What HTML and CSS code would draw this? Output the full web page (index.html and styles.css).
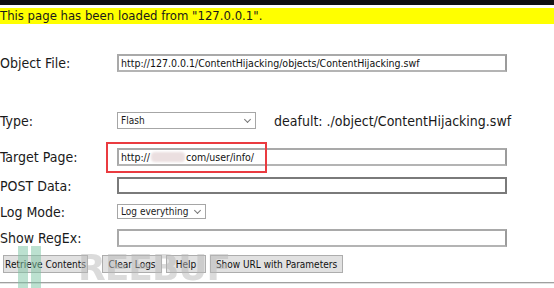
FILE: index.html
```html
<!DOCTYPE html>
<html lang="en">
<head>
    <meta charset="UTF-8">
    <title>Content Hijacking</title>
    <link rel="stylesheet" href="styles.css">
</head>
<body>
    <div class="topbar"></div>
    <div class="notice">This page has been loaded from "127.0.0.1".</div>

    <form class="form">
        <div class="row row-object">
            <label class="label">Object File:</label>
            <input class="field" type="text" value="http://127.0.0.1/ContentHijacking/objects/ContentHijacking.swf">
        </div>
        <div class="row row-type">
            <label class="label">Type:</label>
            <div class="select select-type"><span>Flash</span><span class="caret"></span></div>
            <span class="hint">deafult: ./object/ContentHijacking.swf</span>
        </div>
        <div class="row row-target">
            <label class="label">Target Page:</label>
            <div class="field">http://<span class="blur"></span>com/user/info/</div>
            <div class="highlight"></div>
        </div>
        <div class="row row-post">
            <label class="label">POST Data:</label>
            <div class="field field-dark"></div>
        </div>
        <div class="row row-log">
            <label class="label">Log Mode:</label>
            <div class="select select-log"><span>Log everything</span><span class="caret"></span></div>
        </div>
        <div class="row row-regex">
            <label class="label">Show RegEx:</label>
            <div class="field"></div>
        </div>
        <div class="buttons">
            <button type="button" class="btn">Retrieve Contents</button>
            <button type="button" class="btn">Clear Logs</button>
            <button type="button" class="btn">Help</button>
            <button type="button" class="btn">Show URL with Parameters</button>
        </div>
        <div class="rule"></div>
    </form>

    <div class="watermark">
        <span class="wm-bar"></span>
        <span class="wm-bar"></span>
        <span class="wm-text">REEBUF</span>
    </div>
</body>
</html>
```

FILE: styles.css
```css
/* Base */
* {
    margin: 0;
    padding: 0;
    box-sizing: border-box;
}

body {
    font-family: "DejaVu Sans Condensed", "DejaVu Sans", sans-serif;
    font-size: 14px;
    color: #1a1a1a;
    background: #fff;
    width: 554px;
    height: 288px;
    overflow: hidden;
    position: relative;
}

.topbar {
    height: 5px;
    background: #111;
}

.notice {
    margin-top: 3px;
    height: 16px;
    line-height: 16px;
    background: #ffff00;
    font-size: 13px;
}

/* Form rows */
.form {
    display: flex;
    flex-direction: column;
}

.row {
    display: flex;
    align-items: center;
    position: relative;
}

.label {
    width: 117px;
    flex: none;
}

.row-object { margin-top: 30px; height: 18px; }
.row-type   { margin-top: 40px; height: 17px; }
.row-target { margin-top: 19px; height: 18px; }
.row-post   { margin-top: 11px; height: 17px; }
.row-log    { margin-top: 10px; height: 15px; }
.row-regex  { margin-top: 10px; height: 18px; }

.field {
    width: 390px;
    height: 100%;
    border: 2px solid #a9a9a9;
    border-right-color: #9b9b9b;
    border-bottom-color: #b4b4b4;
    padding: 0 2px;
    font-family: "DejaVu Sans Condensed", sans-serif;
    font-size: 10.5px;
    color: #111;
    background: #fff;
    display: flex;
    align-items: center;
}

.field-dark {
    border-color: #7a7a7a;
}

input.field {
    outline: none;
}

.blur {
    display: inline-block;
    width: 34px;
    height: 10px;
    margin: 0 1px;
    background: #ebdfe0;
    border-radius: 4px;
    filter: blur(1px);
}

.highlight {
    position: absolute;
    left: 106px;
    top: -6px;
    width: 161px;
    height: 31px;
    border: 2px solid #ea3b40;
}

/* Selects */
.select {
    height: 100%;
    border: 1px solid #a6a6a6;
    background: #fff;
    font-size: 10px;
    padding: 0 5px 0 3px;
    display: flex;
    align-items: center;
    justify-content: space-between;
    white-space: nowrap;
}

.select-type { width: 139px; }
.select-log  { width: 89px; }

.caret {
    width: 5px;
    height: 5px;
    border-right: 1px solid #777;
    border-bottom: 1px solid #777;
    transform: rotate(45deg);
    margin-bottom: 3px;
}

.hint {
    margin-left: 18px;
    font-size: 14px;
}

/* Buttons */
.buttons {
    display: flex;
    gap: 4px;
    margin-top: 8px;
    padding-left: 3px;
}

.btn {
    height: 18px;
    padding: 0;
    border: 1px solid #adadad;
    background: #e1e1e1;
    font-family: "DejaVu Sans Condensed", sans-serif;
    font-size: 10px;
    color: #111;
    white-space: nowrap;
}

.buttons .btn:nth-child(1) { width: 85px; }
.buttons .btn:nth-child(2) { width: 60px; margin-left: 10px; }
.buttons .btn:nth-child(3) { width: 40px; }
.buttons .btn:nth-child(4) { width: 133px; }

.rule {
    margin-top: 9px;
    height: 2px;
    background: #a0a0a0;
    border-bottom: 1px solid #e0e0e0;
}

/* Watermark */
.watermark {
    position: absolute;
    left: 18px;
    top: 246px;
    display: flex;
    align-items: flex-start;
    gap: 3px;
    opacity: 0.5;
    pointer-events: none;
}

.wm-bar {
    width: 10px;
    height: 42px;
    background: #7cc4a3;
}

.wm-text {
    margin-left: 34px;
    margin-top: 4px;
    font-family: "DejaVu Sans", sans-serif;
    font-weight: bold;
    font-size: 36px;
    line-height: 36px;
    letter-spacing: -1px;
    color: #b8b8b8;
}
```
